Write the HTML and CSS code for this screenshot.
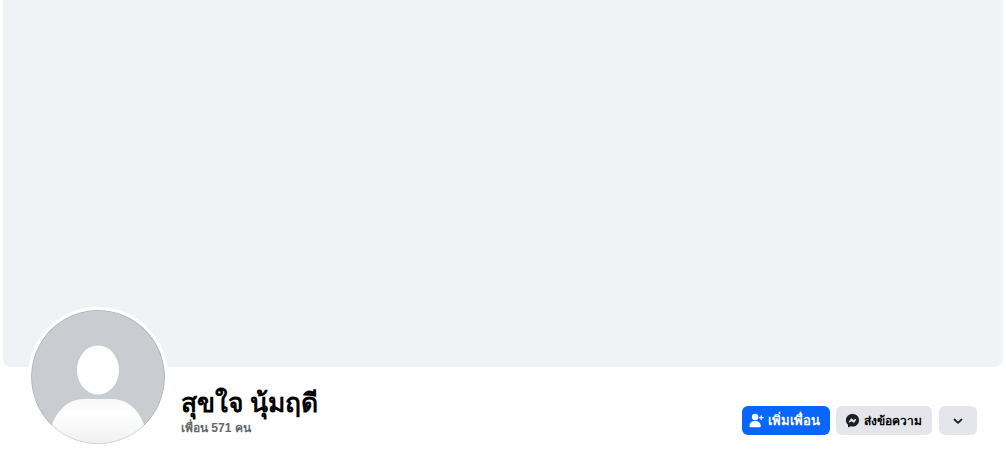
FILE: index.html
```html
<!DOCTYPE html>
<html lang="th">
<head>
  <meta charset="UTF-8" />
  <title>สุขใจ นุ้มฤดี</title>
  <link rel="stylesheet" href="styles.css">
</head>
<body>
  <div class="cover"></div>

  <div class="profile-row">
    <div class="avatar">
      <svg viewBox="0 0 134 134" width="134" height="134">
        <defs>
          <linearGradient id="shoulderFade" x1="0" y1="0" x2="0" y2="1">
            <stop offset="0" stop-color="#f6f7f8" />
            <stop offset="0.3" stop-color="#ffffff" />
            <stop offset="1" stop-color="#eff0f2" />
          </linearGradient>
          <clipPath id="avatarClip"><circle cx="67" cy="67" r="67" /></clipPath>
        </defs>
        <g clip-path="url(#avatarClip)">
          <rect width="134" height="134" fill="#c9ccd1" />
          <ellipse cx="67" cy="60" rx="21" ry="24.5" fill="#ffffff" />
          <path d="M20 134 V118 C24 103 36 89 52 89 H82 C98 89 110 103 114 118 V134 Z" fill="url(#shoulderFade)" />
        </g>
      </svg>
    </div>

    <div class="info">
      <h1 class="name">สุขใจ นุ้มฤดี</h1>
      <div class="friends">เพื่อน 571 คน</div>
    </div>

    <div class="actions">
      <button class="btn btn-primary">
        <svg viewBox="0 0 16 16" width="15" height="15">
          <circle cx="6.5" cy="4.2" r="3.4" fill="#fff" />
          <path d="M0.5 14 C0.5 10.5 3 8.6 6.5 8.6 C10 8.6 12.5 10.5 12.5 14 C12.5 14.8 12 15.2 11.2 15.2 H1.8 C1 15.2 0.5 14.8 0.5 14 Z" fill="#fff" />
          <path d="M13 3 V7 M11 5 H15" stroke="#fff" stroke-width="1.3" stroke-linecap="round" />
        </svg>
        เพิ่มเพื่อน
      </button>
      <button class="btn btn-gray btn-message">
        <svg viewBox="0 0 16 16" width="15" height="15">
          <path d="M8 1C4 1 1 3.900 1 7.600c0 2 .8 3.600 2.200 4.800v2.300c0 .4.4.6.7.5l2.200-1c.6.2 1.200.2 1.900.2 4 0 7-2.900 7-6.800S12 1 8 1z" fill="#1c1e21" />
          <path d="M3.900 9.700 6 6.400c.3-.5 1-.6 1.500-.3l1.700 1.300 2.300-1.300c.3-.2.7.2.5.5L10.300 9.900c-.3.5-1 .6-1.500.3L7 8.900 4.400 10.200c-.3.2-.7-.2-.5-.5z" fill="#e4e6eb" />
        </svg>
        ส่งข้อความ
      </button>
      <button class="btn btn-gray btn-icon">
        <svg viewBox="0 0 12 12" width="12" height="12">
          <path d="M2.500 4.500 6 7.800 9.500 4.500" fill="none" stroke="#1c1e21" stroke-width="1.800" stroke-linecap="round" stroke-linejoin="round" />
        </svg>
      </button>
    </div>
  </div>
</body>
</html>
```

FILE: styles.css
```css
html, body {
  height: 100%;
}

body {
  margin: 0;
  padding: 0 3px;
  background: #fff;
  color: #050505;
  font-family: "Liberation Sans", "Noto Sans", sans-serif;
  overflow: hidden;
  box-sizing: border-box;
}

.cover {
  height: 367px;
  background: #f0f2f5;
  border-radius: 0 0 8px 8px;
}

.profile-row {
  display: flex;
  align-items: flex-start;
  padding: 0 26px 0 25px;
}

.avatar {
  width: 134px;
  height: 134px;
  margin-top: -60px;
  border: 3px solid #fff;
  border-radius: 50%;
  background: #fff;
  flex-shrink: 0;
  position: relative;
}

.avatar svg {
  display: block;
  border-radius: 50%;
}

.avatar::after {
  content: "";
  position: absolute;
  inset: 0;
  border-radius: 50%;
  box-shadow: inset 0 0 0 1px rgba(0, 0, 0, 0.1);
}

.info {
  margin-left: 13px;
  padding-top: 19px;
}

.name {
  margin: 0;
  font-size: 26.4px;
  line-height: 34px;
  font-weight: 700;
  color: #000;
}

.friends {
  font-size: 12px;
  line-height: 16px;
  font-weight: 700;
  color: #65676b;
}

.actions {
  display: flex;
  gap: 6px;
  margin-left: auto;
  padding-top: 39px;
}

.btn {
  display: flex;
  align-items: center;
  justify-content: center;
  gap: 4px;
  height: 29px;
  padding: 0;
  border: none;
  border-radius: 6px;
  font-family: inherit;
  font-size: 12px;
  font-weight: 700;
  white-space: nowrap;
  cursor: pointer;
}

.btn-primary {
  width: 88px;
  padding-right: 3px;
  background: #0866ff;
  color: #fff;
  font-size: 13px;
}

.btn-gray {
  width: 96px;
  background: #e4e6eb;
  color: #050505;
}

.btn-message {
  padding-right: 2px;
}

.btn-icon {
  width: 38px;
  margin-left: 1px;
}
```
